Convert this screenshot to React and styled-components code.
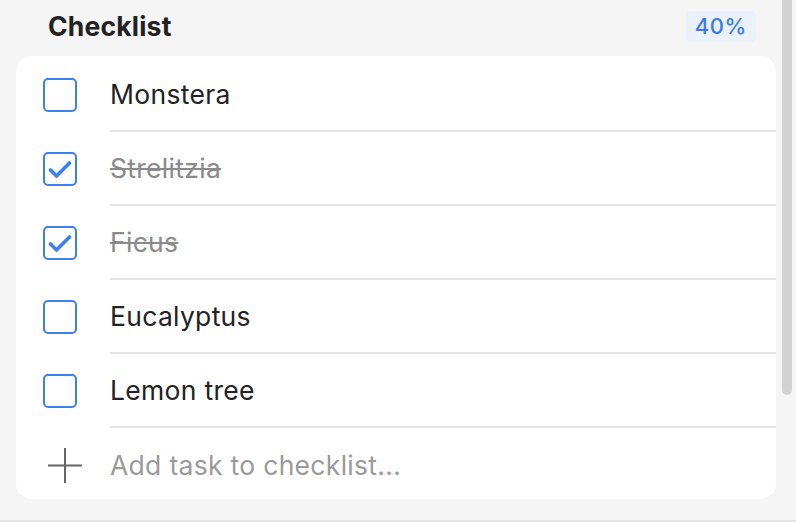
import React from 'react';
import styled, { createGlobalStyle } from 'styled-components';

const GlobalStyle = createGlobalStyle`
  html, body {
    margin: 0;
    padding: 0;
    background: #f5f5f5;
    font-family: Inter, "Noto Sans", sans-serif;
    -webkit-font-smoothing: antialiased;
  }
`;

const Page = styled.div`
  width: 796px;
  height: 522px;
  display: flex;
  flex-direction: column;
  overflow: hidden;
  background: #f5f5f5;
`;

const Body = styled.div`
  display: flex;
  height: 520px;
  border-bottom: 2px solid #e2e2e2;
`;

const Main = styled.div`
  flex: 1;
  display: flex;
  flex-direction: column;
  padding: 0 6px 0 16px;
`;

const ScrollTrack = styled.div`
  width: 14px;
  display: flex;
  flex-direction: column;
`;

const ScrollThumb = styled.div`
  width: 10px;
  height: 395px;
  background: #d3d3d3;
  border-radius: 0 0 5px 5px;
`;

const Header = styled.div`
  height: 52px;
  display: flex;
  align-items: center;
  justify-content: space-between;
  padding: 0 20px 4px 32px;
`;

const Title = styled.h2`
  margin: 0;
  font-size: 26.5px;
  font-weight: 650;
  color: #222;
  letter-spacing: 0.2px;
`;

const Badge = styled.span`
  display: inline-flex;
  align-items: center;
  height: 31px;
  padding: 0 9px;
  border-radius: 5px;
  background: #ebf1fb;
  color: #3a7be9;
  font-size: 22px;
  font-weight: 500;
  letter-spacing: 0.6px;
`;

const Card = styled.div`
  background: #fff;
  border-radius: 16px;
  padding-top: 2px;
  height: 441px;
  display: flex;
  flex-direction: column;
`;

const Row = styled.div`
  display: flex;
  align-items: center;
  height: 74px;
  flex-shrink: 0;
`;

const IconCell = styled.div`
  width: 94px;
  box-sizing: border-box;
  padding-left: ${p => p.$inset}px;
  display: flex;
  align-items: center;
  flex-shrink: 0;
`;

const Content = styled.div`
  flex: 1;
  height: 100%;
  display: flex;
  align-items: center;
  border-bottom: ${p => (p.$last ? 'none' : '2px solid #e5e5e5')};
  box-sizing: border-box;
`;

const Box = styled.div`
  width: 34px;
  height: 34px;
  box-sizing: border-box;
  border: 2px solid #3d7ff0;
  border-radius: 5px;
  display: flex;
  align-items: center;
  justify-content: center;
`;

const Label = styled.span`
  font-size: 26.5px;
  color: ${p => (p.$done ? '#8a8a8a' : '#222')};
  text-decoration: ${p => (p.$done ? 'line-through' : 'none')};
  text-decoration-thickness: 2px;
  letter-spacing: 0.3px;
`;

const Placeholder = styled.span`
  font-size: 26.5px;
  color: #9a9a9a;
  letter-spacing: 0.3px;
`;

const Check = () => (
  <svg width="24" height="19" viewBox="0 0 24 19" fill="none">
    <path d="M2.5 10 L8.5 16 L21.5 3" stroke="#3d7ff0" strokeWidth="3.6" strokeLinecap="round" strokeLinejoin="round" />
  </svg>
);

const Plus = () => (
  <svg width="34" height="35" viewBox="0 0 34 35" fill="none">
    <path d="M17 0 V35 M0 17.5 H34" stroke="#666" strokeWidth="2" />
  </svg>
);

const items = [
  { name: 'Monstera', done: false },
  { name: 'Strelitzia', done: true },
  { name: 'Ficus', done: true },
  { name: 'Eucalyptus', done: false },
  { name: 'Lemon tree', done: false },
];

const App = () => {
  const done = items.filter(i => i.done).length;
  const pct = Math.round((done / items.length) * 100);
  return (
    <Page>
      <GlobalStyle />
      <Body>
        <Main>
          <Header>
            <Title>Checklist</Title>
            <Badge>{pct}%</Badge>
          </Header>
          <Card>
            {items.map(item => (
              <Row key={item.name}>
                <IconCell $inset={27}>
                  <Box>{item.done && <Check />}</Box>
                </IconCell>
                <Content>
                  <Label $done={item.done}>{item.name}</Label>
                </Content>
              </Row>
            ))}
            <Row>
              <IconCell $inset={32}>
                <Plus />
              </IconCell>
              <Content $last>
                <Placeholder>Add task to checklist...</Placeholder>
              </Content>
            </Row>
          </Card>
        </Main>
        <ScrollTrack>
          <ScrollThumb />
        </ScrollTrack>
      </Body>
    </Page>
  );
};

export default App;
